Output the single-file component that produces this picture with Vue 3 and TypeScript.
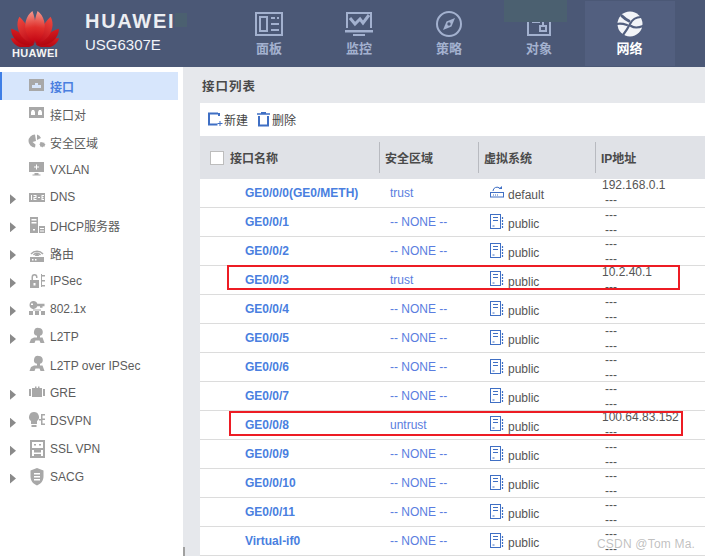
<script setup lang="ts">
// 侧边菜单和接口列表的数据
interface MenuItem { label: string; icon: string; arrow?: boolean; active?: boolean }
interface Row { name: string; zone: string; vsys: string; ip: string }

const menu: MenuItem[] = [
  { label: '接口', icon: 'port', active: true },
  { label: '接口对', icon: 'pair' },
  { label: '安全区域', icon: 'zone' },
  { label: 'VXLAN', icon: 'vxlan' },
  { label: 'DNS', icon: 'dns', arrow: true },
  { label: 'DHCP服务器', icon: 'dhcp', arrow: true },
  { label: '路由', icon: 'route', arrow: true },
  { label: 'IPSec', icon: 'ipsec', arrow: true },
  { label: '802.1x', icon: 'dot1x', arrow: true },
  { label: 'L2TP', icon: 'l2tp', arrow: true },
  { label: 'L2TP over IPSec', icon: 'l2tp' },
  { label: 'GRE', icon: 'gre', arrow: true },
  { label: 'DSVPN', icon: 'dsvpn', arrow: true },
  { label: 'SSL VPN', icon: 'ssl', arrow: true },
  { label: 'SACG', icon: 'sacg', arrow: true },
]

const icons: Record<string, string> = {
  port: 'M1 3h15v12H1z M4 12V9h3V7h3v2h3v3z',
  pair: 'M1 3h15v11H1z M3 11V8l1-2h2l1 2v3z M10 11V8l1-2h2l1 2v3z',
  zone: 'M7 2.500A6.500 6.500 0 0 0 7 15.500l.5-3-3-2.500 3.500-1z M9 2.500a6.500 6.500 0 0 1 4 3.500l-4 2z M14 10l1 .8 1.200-.3.3 1.200 1 .8-.8 1-.2 1.300-1.300-.2-1 .9-1-.9-1.200-.1.1-1.300-.8-1 .9-.9.1-1.200 1.200.2z',
  vxlan: 'M1 2h15v10H1z M8 4.500v2H6v1h2v2h1v-2h2v-1H9v-2z M6.500 13h4v1.500h2v1h-8v-1h2z',
  dns: 'M1 5h16v9H1z M3 7v5h1V7z M5.500 7v1h2v1h-2v3h3v-1h-2v-1h2V7z M10 9v1h2V9z M13.500 7v5h2.500v-1h-1.500V10h1V9h-1V8h1.500V7z',
  dhcp: 'M2 1h8v16H2z M3.500 3v1.500h5V3z M3.500 6v1.500h5V6z M5 13v1.500h2V13z M11 10h6v7h-6z M12 12v1h4v-1z M12 14.500v1h4v-1z',
  route: 'M2 13h14v5H2z M4 15v1.500h1.500V15z M7 15v1.500h1.500V15z M7.500 9.500a2 2 0 0 1 3 0l.5 2.500H7z',
  ipsec: 'M2 8h9v8H2z M5.500 11v2.500h2V11z M3.500 8V5a3 3 0 0 1 6 0v1H8V5a1.500 1.500 0 0 0-3 0v3z M13 2h1v13h-1z M14 3h3v1.500h-3z M14 8h3v1.500h-3z M14 13h3v1.500h-3z',
  dot1x: 'M5.500 2a4 4 0 0 1 3.800 2.800h7.200v2.500h-2v1.500h-2.500V7.300H9.300A4 4 0 1 1 5.500 2z M3 4.500v1.500h2V4.500z M1 12h4v4H1z M7 12h4v4H7z M13 12h4v4h-4z M5 10.500h8v1H5z',
  l2tp: 'M11 1a4 4 0 0 1 1 7.800v1.700h2.500l2 5.500h-4l-1-2.500H7.500l-1 2.500h-5l1.500-4 3-1.500H9V8.800A4 4 0 0 1 11 1z',
  gre: 'M1 6h2v7H1z M15 6h2v7h-2z M4 5h10v9H4z M7 3.500h1.500V5H7z M10 3.500h1.500V5H10z',
  dsvpn: 'M6 1a5 5 0 0 1 3 9v3H3v-3a5 5 0 0 1 3-9z M3.500 14h5v2h-5z M11 8h2V3h4v1.500h-2.500v3H17V9h-2.500v3.500H17V14h-4V9.500h-2z',
  ssl: 'M2 1h15v18H2z M4 3v6h11V3z M6 5h2v1.500H6z M11 5h2v1.500h-2z M4 11v6h2v-2h7v2h2v-6h-2v2.500H6V11z',
  sacg: 'M9 1l6.500 2.500v6c0 4.500-3 7.500-6.500 9-3.500-1.500-6.500-4.500-6.500-9v-6z M6 6v1.500h6V6z M6 9v1.500h6V9z M6 12v1.500h6V12z',
}

const names = ['GE0/0/0(GE0/METH)', 'GE0/0/1', 'GE0/0/2', 'GE0/0/3', 'GE0/0/4', 'GE0/0/5', 'GE0/0/6', 'GE0/0/7', 'GE0/0/8', 'GE0/0/9', 'GE0/0/10', 'GE0/0/11', 'Virtual-if0']
const zones: Record<string, string> = { 0: 'trust', 3: 'trust', 8: 'untrust' }
const ips: Record<string, string> = { 0: '192.168.0.1', 3: '10.2.40.1', 8: '100.64.83.152' }

const rows: Row[] = names.map((name, i) => ({
  name,
  zone: zones[i] ?? '-- NONE --',
  vsys: i === 0 ? 'default' : 'public',
  ip: ips[i] ?? '',
}))

// 华为标志的花瓣，左右对称，尖端靠内
const petalShape = [
  { a: 80, s: 0.8, g: 'url(#petalLow)' },
  { a: 61, s: 0.92, g: 'url(#petalLow)' },
  { a: 34, s: 1.02, g: 'url(#petalMid)' },
  { a: 9, s: 1.08, g: 'url(#petalTop)' },
]
const petals = petalShape.flatMap((p) => [
  { key: `r${p.a}`, g: p.g, t: `rotate(${p.a}) scale(${p.s})` },
  { key: `l${p.a}`, g: p.g, t: `rotate(${-p.a}) scale(${-p.s} ${p.s})` },
])
</script>

<template>
  <div class="page">
    <header class="topbar">
      <div class="brand">
        <div class="logo">
          <svg width="48" height="37" viewBox="0 0 48 37">
            <defs>
              <linearGradient id="petalTop" x1="0" y1="0" x2="0" y2="1">
                <stop offset="0" stop-color="#f49a8e" />
                <stop offset="0.5" stop-color="#e0302c" />
                <stop offset="1" stop-color="#c00010" />
              </linearGradient>
              <linearGradient id="petalMid" x1="0" y1="0" x2="0" y2="1">
                <stop offset="0" stop-color="#ee4a40" />
                <stop offset="1" stop-color="#b80010" />
              </linearGradient>
              <linearGradient id="petalLow" x1="0" y1="0" x2="1" y2="1">
                <stop offset="0" stop-color="#d81c20" />
                <stop offset="1" stop-color="#a8000c" />
              </linearGradient>
            </defs>
            <g transform="translate(24 34.500)">
              <path
                v-for="p in petals"
                :key="p.key"
                :fill="p.g"
                :transform="p.t"
                d="M0.500 -1C-3.500 -10 -4.500 -22 -2.500 -31C4 -28 8 -19 6 -11C5 -7 2.500 -3.500 0.500 -1Z"
              />
            </g>
          </svg>
          <span class="logo-text">HUAWEI</span>
        </div>
        <div class="brand-text">
          <div class="brand-name">HUAWEI</div>
          <div class="brand-model">USG6307E</div>
        </div>
      </div>

      <nav class="nav">
        <div class="nav-item">
          <svg class="nav-icon" width="30" height="26" viewBox="0 0 30 26" fill="none" stroke="currentColor" stroke-width="2">
            <rect x="2" y="2" width="26" height="22" />
            <rect x="6" y="6" width="7" height="14" />
            <path d="M17 7h4M23 7h2M17 13h8M17 19h8" />
          </svg>
          <span>面板</span>
        </div>
        <div class="nav-item">
          <svg class="nav-icon" width="30" height="26" viewBox="0 0 30 26" fill="none" stroke="currentColor" stroke-width="2">
            <path d="M3 17V2h24v15" />
            <path d="M6 7l5 6 5-5 3 4 6-8" stroke-width="3" />
            <path d="M1 19h28v2.500H1z" fill="currentColor" stroke="none" />
            <path d="M9 24h12" />
          </svg>
          <span>监控</span>
        </div>
        <div class="nav-item">
          <svg class="nav-icon" width="30" height="26" viewBox="0 0 30 26" fill="none" stroke="currentColor" stroke-width="2">
            <circle cx="15" cy="13" r="12" />
            <path d="M21 7l-3.500 8.500L9 19l3.500-8.500z" fill="currentColor" stroke="none" />
            <circle cx="15" cy="13" r="1.700" fill="#4b5876" stroke="none" />
          </svg>
          <span>策略</span>
        </div>
        <div class="nav-item">
          <svg class="nav-icon" width="30" height="26" viewBox="0 0 30 26" fill="none" stroke="currentColor" stroke-width="2">
            <rect x="4" y="2" width="22" height="22" />
            <rect x="9" y="6" width="6" height="5" />
            <rect x="16" y="15" width="6" height="5" />
            <path d="M15 8.500h4v6" />
          </svg>
          <span>对象</span>
        </div>
        <div class="nav-item is-active">
          <svg class="nav-icon" width="30" height="26" viewBox="0 0 30 26">
            <circle cx="15" cy="13" r="12.500" fill="#f2f4f8" />
            <g fill="none" stroke="#525f7f" stroke-width="2.200" stroke-linecap="round">
              <path d="M26 6C21 6 17 9 15 13C13 17 11 20 8 24" />
              <path d="M7 5C9 7 12 9 14 10" stroke-width="3" />
              <path d="M2 13C6 12 9 13 12 14" />
              <path d="M16 15C19 17 23 17 28 15" />
            </g>
          </svg>
          <span>网络</span>
        </div>
      </nav>
      <i class="patch patch-a"></i>
      <i class="patch patch-b"></i>
    </header>

    <div class="body">
      <aside class="sidebar">
        <div
          v-for="item in menu"
          :key="item.label"
          class="menu-item"
          :class="{ active: item.active, 'has-arrow': item.arrow }"
        >
          <span class="arrow"></span>
          <svg class="menu-icon" width="18" height="20" viewBox="0 0 18 20">
            <path v-if="item.icon === 'route'" d="M3 10a8 8 0 0 1 12 0M5.500 11a4.500 4.500 0 0 1 7 0" fill="none" stroke="#a8a8a8" stroke-width="1.500" />
            <path :d="icons[item.icon]" fill="#a8a8a8" fill-rule="evenodd" />
          </svg>
          <span class="menu-label">{{ item.label }}</span>
        </div>
        <i class="scroll-thumb"></i>
      </aside>

      <main class="main">
        <h2 class="title">接口列表</h2>
        <section class="panel">
          <div class="toolbar">
            <span class="tool">
              <svg width="15" height="15" viewBox="0 0 15 15" fill="none" stroke="#3f6fc4" stroke-width="2">
                <path d="M10 1.500H1v11h8.500M11 1v3" />
                <path d="M12 9v5M9.500 11.500h5" stroke-width="1" />
              </svg>
              新建
            </span>
            <span class="tool">
              <svg width="13" height="15" viewBox="0 0 13 15" fill="none" stroke="#3f6fc4">
                <path d="M0 2h13M4 .7h5" stroke-width="1.500" />
                <path d="M2 4v9.500h9V4" stroke-width="2" />
              </svg>
              删除
            </span>
          </div>

          <div class="grid head">
            <div class="cell first"><i class="checkbox"></i><span>接口名称</span></div>
            <div class="cell"><span class="divider"></span><span>安全区域</span></div>
            <div class="cell"><span class="divider"></span><span>虚拟系统</span></div>
            <div class="cell"><span class="divider"></span><span>IP地址</span></div>
          </div>

          <div v-for="row in rows" :key="row.name" class="grid row">
            <div class="name">{{ row.name }}</div>
            <div class="zone">{{ row.zone }}</div>
            <div class="vsys">
              <svg v-if="row.vsys === 'default'" width="14" height="14" viewBox="0 0 14 14" fill="none" stroke="#3f6fc4">
                <path d="M3 6a4 4 0 0 1 7-2.500" />
                <path d="M8.500 4h3.500V1z" fill="#3f6fc4" stroke="none" />
                <rect x=".5" y="7.500" width="13" height="4.500" />
                <path d="M3 10h1M5 10h1M7 10h1" />
              </svg>
              <svg v-else width="14" height="15" viewBox="0 0 14 15" fill="none" stroke="#3f6fc4">
                <rect x=".5" y=".5" width="10" height="14" />
                <path d="M3 3.500h5M3 6.500h5" />
                <path d="M2.500 12h2" />
                <path d="M12.500 3v2M12.500 6v2M12.500 9v2M12.500 12v2" stroke-width="1.200" />
              </svg>
              <span>{{ row.vsys }}</span>
            </div>
            <div class="ip">
              <div v-if="row.ip" class="ip-value">{{ row.ip }}</div>
              <div v-else class="dash">---</div>
              <div class="dash">---</div>
            </div>
          </div>
        </section>
      </main>
    </div>

    <i class="mark mark-a"></i>
    <i class="mark mark-b"></i>
    <span class="watermark">CSDN @Tom Ma.</span>
  </div>
</template>

<style>
html,
body {
  margin: 0;
  background: #e6e8ec;
}
</style>

<style scoped>
.page {
  position: relative;
  width: 705px;
  height: 556px;
  overflow: hidden;
  font-family: "Liberation Sans", "Noto Sans CJK SC", sans-serif;
  font-size: 12px;
  color: #555;
  background: #e6e8ec;
}

/* 顶部导航 */
.topbar {
  position: relative;
  display: flex;
  height: 67px;
  background: #4b5876;
}
.brand {
  display: flex;
  width: 224px;
  flex: none;
}
.logo {
  display: flex;
  flex-direction: column;
  align-items: center;
  width: 48px;
  margin: 10px 0 0 11px;
}
.logo svg {
  display: block;
}
.logo-text {
  font-size: 11px;
  line-height: 13px;
  font-weight: 700;
  letter-spacing: 0.3px;
  color: #f4f4f4;
}
.brand-text {
  margin: 10px 0 0 26px;
}
.brand-name {
  font-size: 20px;
  line-height: 22px;
  font-weight: 700;
  letter-spacing: 1.700px;
  color: #eceef2;
}
.brand-model {
  margin-top: 3px;
  font-size: 15px;
  line-height: 20px;
  color: #f2f4f8;
}
.nav {
  display: flex;
}
.nav-item {
  display: flex;
  flex-direction: column;
  align-items: center;
  width: 90px;
  height: 65px;
  margin-top: 1px;
  padding-top: 10px;
  box-sizing: border-box;
  font-size: 13px;
  line-height: 18px;
  font-weight: 700;
  color: #a3b1cf;
}
.nav-icon {
  display: block;
  margin-bottom: 3px;
}
.nav-item.is-active {
  margin-left: 1px;
  padding-right: 1px;
  background: #525f7f;
  color: #fff;
}
.patch {
  position: absolute;
  top: 0;
  background: #4b6070;
}
.patch-a {
  left: 504px;
  width: 63px;
  height: 22px;
}
.patch-b {
  left: 175px;
  top: 13px;
  width: 12px;
  height: 14px;
}

.body {
  display: flex;
  height: 489px;
}

/* 侧边菜单 */
.sidebar {
  position: relative;
  width: 183px;
  flex: none;
  padding-top: 5px;
  box-sizing: border-box;
  background: #fff;
}
.menu-item {
  display: flex;
  align-items: center;
  width: 178px;
  height: 27.950px;
  box-sizing: border-box;
  border-left: 2px solid transparent;
}
.menu-item.active {
  border-left-color: #3f7fe6;
  background: #d7e6fc;
}
.arrow {
  width: 6px;
  height: 10px;
  margin: 3px 0 0 8px;
  flex: none;
}
.has-arrow .arrow {
  background: #8a8a8a;
  clip-path: polygon(0 0, 100% 50%, 0 100%);
}
.menu-icon {
  flex: none;
  margin-left: 12px;
}
.menu-label {
  margin: 1px 0 0 4px;
  color: #5c5c5c;
  white-space: nowrap;
}
.has-arrow .menu-label {
  margin: 0 0 1px 4px;
}
.menu-item.active .menu-label {
  color: #4a7fe0;
  font-weight: 700;
}
.scroll-thumb {
  position: absolute;
  left: 183px;
  bottom: 0;
  width: 2px;
  height: 9px;
  background: #a0a0a0;
}

/* 接口列表 */
.main {
  flex: 1;
  min-width: 0;
  padding-left: 17px;
}
.title {
  margin: 0;
  padding-left: 2px;
  height: 36px;
  font-size: 12.500px;
  line-height: 40px;
  font-weight: 700;
  letter-spacing: 1px;
  color: #4a4a4a;
}
.panel {
  height: 453px;
  background: #fff;
}
.toolbar {
  display: flex;
  align-items: center;
  gap: 9px;
  height: 32px;
  padding: 0 0 1px 8px;
  color: #444;
}
.tool {
  display: flex;
  align-items: center;
  gap: 1px;
}
.tool + .tool {
  gap: 2px;
}
.grid {
  display: grid;
  grid-template-columns: 179px 99px 117px 1fr;
}
.head {
  height: 43px;
  background: #e0e2e7;
  font-weight: 700;
  color: #4a4a4a;
}
.cell {
  display: flex;
  align-items: center;
  position: relative;
  padding-left: 6px;
}
.cell.first {
  padding-left: 10px;
}
.divider {
  position: absolute;
  left: 0;
  top: 6px;
  height: 31px;
  width: 1px;
  background: #b8bac0;
}
.checkbox {
  width: 12px;
  height: 12px;
  margin-right: 6px;
  border: 1px solid #bdbdbd;
  background: #fff;
}
.row {
  height: 29px;
  box-sizing: border-box;
  border-bottom: 1px solid #dcdcdc;
  align-items: center;
}
.name {
  padding-left: 45px;
  margin-bottom: 1px;
  font-weight: 700;
  color: #4a7fe0;
}
.zone {
  padding-left: 11px;
  margin-bottom: 1px;
  color: #5a7de0;
}
.vsys {
  display: flex;
  align-items: center;
  gap: 4px;
  padding-left: 12px;
}
.vsys svg {
  margin-top: -3px;
}
.vsys span {
  margin-top: 3px;
}
.ip {
  padding-left: 7px;
  line-height: 14.500px;
}
.ip-value {
  margin-top: -1px;
}
.dash {
  padding-left: 3px;
}

/* 红框标注 */
.mark {
  position: absolute;
  box-sizing: border-box;
  border: 2px solid #ed1c24;
}
.mark-a {
  left: 227px;
  top: 265px;
  width: 453px;
  height: 25px;
}
.mark-b {
  left: 229px;
  top: 411px;
  width: 454px;
  height: 25px;
}
.watermark {
  position: absolute;
  left: 597px;
  top: 536px;
  font-size: 12px;
  line-height: 16px;
  letter-spacing: 0.2px;
  color: rgba(150, 150, 150, 0.6);
}
</style>
